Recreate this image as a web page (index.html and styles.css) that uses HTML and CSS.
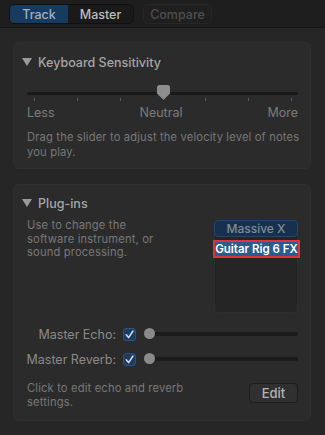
FILE: index.html
```html
<!DOCTYPE html>
<html>
<head>
<meta charset="utf-8">
<link rel="stylesheet" href="styles.css">
</head>
<body>
<div class="topbar">
  <div class="segmented">
    <div class="seg seg-active">Track</div>
    <div class="seg">Master</div>
  </div>
  <div class="btn-compare">Compare</div>
</div>
<div class="content">
  <section class="panel panel-keyboard">
    <div class="panel-title">
      <svg class="disclosure" width="10" height="8" viewBox="0 0 10 8"><path d="M0 0 H10 L5 8 Z" fill="#9a9a9a"/></svg>
      <span>Keyboard Sensitivity</span>
    </div>
    <div class="vslider">
      <div class="vtrack"></div>
      <div class="ticks">
        <span></span><span></span><span></span><span class="tick-hidden"></span><span></span><span></span><span></span>
      </div>
      <svg class="vthumb" width="13" height="15" viewBox="0 0 13 15"><path d="M2.5 0 H10.5 Q13 0 13 2.5 V8.5 L6.5 15 L0 8.5 V2.5 Q0 0 2.5 0 Z" fill="#8d8d8d"/></svg>
    </div>
    <div class="vlabels">
      <span>Less</span><span>Neutral</span><span>More</span>
    </div>
    <p class="desc desc-keyboard">Drag the slider to adjust the velocity level of notes you play.</p>
  </section>

  <section class="panel panel-plugins">
    <div class="panel-title">
      <svg class="disclosure" width="10" height="8" viewBox="0 0 10 8"><path d="M0 0 H10 L5 8 Z" fill="#9a9a9a"/></svg>
      <span>Plug-ins</span>
    </div>
    <div class="plug-row">
      <p class="desc plug-desc">Use to change the software instrument, or sound processing.</p>
      <div class="plug-list">
        <div class="plug-item">Massive X</div>
        <div class="plug-edit"><span class="plug-sel">Guitar Rig 6 FX</span></div>
      </div>
    </div>
    <div class="mix-rows">
      <div class="mix-label">Master Echo:</div>
      <div class="check"><svg width="13" height="13" viewBox="0 0 13 13"><path d="M3.2 6.8 L5.6 9.6 L10 3" fill="none" stroke="#d6dde6" stroke-width="1.5" stroke-linecap="round" stroke-linejoin="round"/></svg></div>
      <div class="hslider"><div class="htrack"></div><div class="hthumb"></div></div>
      <div class="mix-label">Master Reverb:</div>
      <div class="check"><svg width="13" height="13" viewBox="0 0 13 13"><path d="M3.2 6.8 L5.6 9.6 L10 3" fill="none" stroke="#d6dde6" stroke-width="1.5" stroke-linecap="round" stroke-linejoin="round"/></svg></div>
      <div class="hslider"><div class="htrack"></div><div class="hthumb"></div></div>
    </div>
    <div class="edit-row">
      <p class="desc edit-desc">Click to edit echo and reverb settings.</p>
      <div class="btn-edit">Edit</div>
    </div>
  </section>
</div>
</body>
</html>
```

FILE: styles.css
```css
* { box-sizing: border-box; }
html, body {
  margin: 0;
  padding: 0;
  background: #262626;
  font-family: Inter, "Noto Sans", sans-serif;
  width: 325px;
  height: 435px;
  overflow: hidden;
}
.topbar {
  height: 28px;
  background: #1e1e1e;
  border-bottom: 1px solid #141414;
  display: flex;
  align-items: flex-start;
  padding: 4px 9px 0 9px;
  gap: 9px;
}
.segmented {
  display: flex;
  height: 20px;
  width: 125px;
  background: #1a1a1a;
  border: 1px solid #111;
  border-radius: 5px;
  overflow: hidden;
}
.seg {
  display: flex;
  align-items: center;
  justify-content: center;
  font-size: 12.5px;
  font-weight: 500;
  color: #bdbdbd;
  flex: 1;
}
.seg-active {
  flex: 0 0 58px;
  background: #173a5f;
  color: #9fb2c4;
}
.btn-compare {
  width: 69px;
  height: 20px;
  border-radius: 5px;
  background: #1f1f1f;
  border: 1px solid #262626;
  color: #4e4e4e;
  font-size: 12.5px;
  font-weight: 500;
  display: flex;
  align-items: center;
  justify-content: center;
}
.content {
  display: flex;
  flex-direction: column;
  gap: 15px;
  padding: 14px 14px 0 13px;
}
.panel {
  background: #2b2b2b;
  border: 1px solid #2f2f2f;
  border-radius: 6px;
  padding: 11px 12px 0 13px;
}
.panel-title {
  display: flex;
  align-items: center;
  gap: 6px;
  height: 16px;
  margin-left: -5px;
  color: #a6a6a6;
  font-size: 12.5px;
  font-weight: 500;
}
.panel-keyboard { height: 127px; }
.panel-plugins { height: 237px; padding-top: 10px; }

.vslider {
  position: relative;
  height: 18px;
  margin-top: 14px;
}
.vtrack {
  position: absolute;
  left: 0; right: 0; top: 8px;
  height: 3px;
  border-radius: 2px;
  background: #191919;
}
.ticks {
  position: absolute;
  left: 7px; right: 6px; top: 14px;
  display: flex;
  justify-content: space-between;
}
.ticks span {
  width: 1px;
  height: 3px;
  background: #5a5a5a;
}
.ticks .tick-hidden { visibility: hidden; }
.vthumb {
  position: absolute;
  left: 130px;
  top: 1px;
}
.vlabels {
  display: flex;
  justify-content: space-between;
  margin-top: 4px;
  line-height: 14px;
  font-size: 12.5px;
  color: #7b7b7b;
}
.desc {
  margin: 0;
  color: #787878;
  font-size: 11.2px;
  letter-spacing: 0.15px;
  line-height: 14.5px;
}
.desc-keyboard { margin-top: 10px; margin-right: -9px; }

.plug-row {
  display: flex;
  justify-content: space-between;
  margin-top: 8px;
}
.plug-desc { width: 128px; line-height: 13.5px; }
.plug-list {
  width: 84px;
  height: 93px;
  margin-top: 1px;
  background: #252525;
  border: 1px solid #2e2e2e;
  border-radius: 4px;
  display: flex;
  flex-direction: column;
}
.plug-item {
  height: 17px;
  margin: -1px -1px 0 -1px;
  background: #15314f;
  border: 1px solid #22466b;
  border-radius: 4px;
  color: #808b97;
  font-size: 12px;
  font-weight: 500;
  display: flex;
  align-items: center;
  justify-content: center;
}
.plug-edit {
  margin: 3px -3px 0 -2px;
  height: 18px;
  border: 2px solid #e0323c;
  background: #2b2b2b;
  display: flex;
  align-items: center;
}
.plug-sel {
  flex: 1;
  height: 14px;
  background: #2a5b93;
  color: #ffffff;
  font-size: 11.5px;
  font-weight: 600;
  line-height: 14px;
  text-align: center;
  white-space: nowrap;
  overflow: hidden;
}

.mix-rows {
  display: grid;
  grid-template-columns: 92px 13px 1fr;
  column-gap: 7px;
  row-gap: 5px;
  margin-top: 11px;
  margin-left: -3px;
  align-items: center;
}
.mix-rows > .hslider { margin-left: 1px; }
.mix-label {
  height: 20px;
  display: flex;
  align-items: center;
  justify-content: flex-end;
  white-space: nowrap;
  color: #8a8a8a;
  font-size: 12.5px;
}
.check {
  width: 13px;
  height: 13px;
  border-radius: 3px;
  background: #1c3c62;
  border: 1px solid #2b5382;
  display: flex;
  align-items: center;
  justify-content: center;
}
.check svg { flex: none; }
.hslider {
  position: relative;
  height: 20px;
}
.htrack {
  position: absolute;
  left: 5px; right: 0; top: 8px;
  height: 4px;
  border-radius: 2px;
  background: #1b1b1b;
}
.hthumb {
  position: absolute;
  left: 0; top: 4px;
  width: 11px;
  height: 11px;
  border-radius: 50%;
  background: #8a8a8a;
}
.edit-row {
  display: flex;
  justify-content: space-between;
  align-items: flex-start;
  margin-top: 12px;
}
.edit-desc { width: 165px; line-height: 14px; }
.btn-edit {
  margin-top: 2px;
  width: 49px;
  height: 20px;
  border-radius: 4px;
  background: #303030;
  border: 1px solid #1c1c1c;
  color: #b4b4b4;
  font-size: 13px;
  font-weight: 500;
  display: flex;
  align-items: center;
  justify-content: center;
}
```
